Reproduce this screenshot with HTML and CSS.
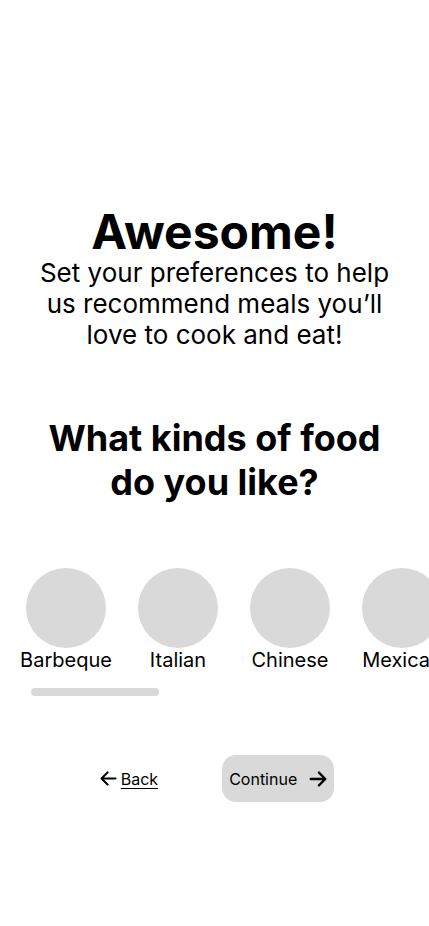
FILE: index.html
```html
<!DOCTYPE html>
<html lang="en">
<head>
    <meta charset="UTF-8">
    <meta name="viewport" content="width=device-width, initial-scale=1.0">
    <title>Food Preferences</title>
    <link rel="stylesheet" href="styles.css">
</head>
<body>
    <div class="screen">
        <div class="intro">
            <h1>Awesome!</h1>
            <p>Set your preferences to help us recommend meals you’ll love to cook and eat!</p>
        </div>

        <h2 class="question">What kinds of food do you like?</h2>

        <div class="cuisines">
            <div class="cuisine">
                <div class="thumb"></div>
                <span>Barbeque</span>
            </div>
            <div class="cuisine">
                <div class="thumb"></div>
                <span>Italian</span>
            </div>
            <div class="cuisine">
                <div class="thumb"></div>
                <span>Chinese</span>
            </div>
            <div class="cuisine">
                <div class="thumb"></div>
                <span>Mexican</span>
            </div>
        </div>
        <div class="scrollbar"></div>

        <div class="actions">
            <a class="back" href="#">
                <svg width="21" height="21" viewBox="0 0 24 24" fill="none" stroke="currentColor" stroke-width="2.4" stroke-linecap="round" stroke-linejoin="round">
                    <path d="M20 12H4M11 19l-7-7 7-7"/>
                </svg>
                <span>Back</span>
            </a>
            <button class="continue">
                Continue
                <svg width="22" height="22" viewBox="0 0 24 24" fill="none" stroke="currentColor" stroke-width="2.5" stroke-linecap="round" stroke-linejoin="round">
                    <path d="M4 12h16M13 5l7 7-7 7"/>
                </svg>
            </button>
        </div>
    </div>
</body>
</html>
```

FILE: styles.css
```css
body {
    margin: 0;
    font-family: 'Inter', 'Noto Sans', sans-serif;
    color: #000;
    background-color: #fff;
    overflow-x: hidden;
}

.screen {
    padding-top: 208px;
}

.intro {
    text-align: center;
}

.intro h1 {
    margin: 0;
    font-size: 48px;
    font-weight: 700;
    line-height: 48px;
}

.intro p {
    margin: 1px auto 0;
    max-width: 380px;
    font-size: 26px;
    line-height: 31px;
}

.question {
    margin: 66px auto 0;
    max-width: 340px;
    text-align: center;
    font-size: 36px;
    font-weight: 700;
    line-height: 44px;
}

.cuisines {
    display: flex;
    gap: 32px;
    margin-top: 64px;
    padding-left: 26px;
    overflow: hidden;
}

.cuisine {
    display: flex;
    flex-direction: column;
    align-items: center;
    width: 80px;
    flex-shrink: 0;
}

.thumb {
    width: 80px;
    height: 80px;
    border-radius: 50%;
    background-color: #d9d9d9;
}

.cuisine span {
    font-size: 20px;
    line-height: 24px;
    white-space: nowrap;
}

.scrollbar {
    width: 128px;
    height: 8px;
    margin: 16px 0 0 31px;
    border-radius: 4px;
    background-color: #d9d9d9;
}

.actions {
    display: flex;
    justify-content: center;
    align-items: center;
    gap: 64px;
    margin-top: 59px;
    padding-left: 3px;
}

.back {
    display: flex;
    align-items: center;
    gap: 2px;
    color: #000;
    font-size: 16px;
    text-decoration: none;
}

.back span {
    text-decoration: underline;
    text-underline-offset: 3px;
}

.continue {
    display: flex;
    align-items: center;
    gap: 10px;
    height: 47px;
    padding: 0 5px 0 7px;
    border: none;
    border-radius: 14px;
    background-color: #d9d9d9;
    color: #000;
    font-family: inherit;
    font-size: 16px;
    cursor: pointer;
}
```
